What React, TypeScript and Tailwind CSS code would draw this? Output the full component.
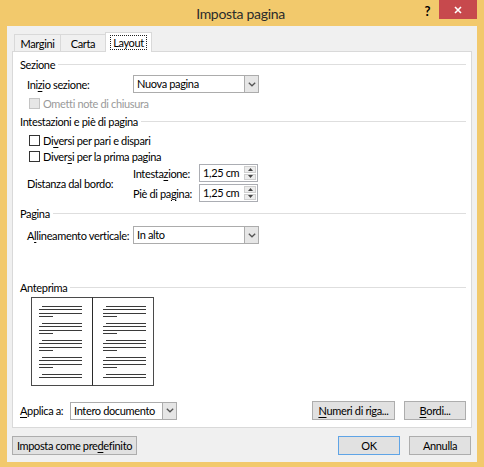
import React from 'react';

function U({ children }: { children: React.ReactNode }) {
  return <span className="underline underline-offset-[2px] decoration-[1px]">{children}</span>;
}

function Header({ label }: { label: string }) {
  return (
    <div className="flex items-center h-[15px] gap-[3px]">
      <span>{label}</span>
      <div className="flex-1 h-px bg-[#dedede]" />
    </div>
  );
}

function Chevron() {
  return (
    <svg width="8" height="5" viewBox="0 0 8 5">
      <path d="M0.8 0.8 L4 3.8 L7.2 0.8" fill="none" stroke="#555" strokeWidth="1.3" />
    </svg>
  );
}

function Select({ value, className }: { value: string; className: string }) {
  return (
    <div className={`flex h-[18px] border border-[#acacac] bg-white ${className}`}>
      <div className="flex-1 pl-[3px] leading-[16px]">{value}</div>
      <div className="w-[14px] bg-[#e6e6e6] border-l border-[#acacac] flex items-center justify-center">
        <Chevron />
      </div>
    </div>
  );
}

function Spinner({ value }: { value: string }) {
  return (
    <div className="flex h-[18px] w-[59px] border border-[#abadb3] bg-white">
      <div className="flex-1 pl-[3px] leading-[16px]">{value}</div>
      <div className="w-[14px] flex flex-col gap-px p-px">
        <div className="flex-1 bg-[#ececec] border border-[#cfcfcf] flex items-center justify-center">
          <svg width="5" height="3" viewBox="0 0 5 3"><path d="M0 3 L2.5 0 L5 3 Z" fill="#444" /></svg>
        </div>
        <div className="flex-1 bg-[#ececec] border border-[#cfcfcf] flex items-center justify-center">
          <svg width="5" height="3" viewBox="0 0 5 3"><path d="M0 0 L2.5 3 L5 0 Z" fill="#444" /></svg>
        </div>
      </div>
    </div>
  );
}

function Checkbox({ disabled }: { disabled?: boolean }) {
  return (
    <div
      className={
        disabled
          ? 'w-[11px] h-[11px] border border-[#c4c4c4] bg-[#e6e6e6]'
          : 'w-[11px] h-[11px] border border-[#333] bg-white'
      }
    />
  );
}

function Button({ children, className }: { children: React.ReactNode; className: string }) {
  return (
    <div className={`h-[19px] border bg-[#e1e1e1] flex items-center justify-center ${className}`}>
      {children}
    </div>
  );
}

function BookPreview() {
  const groups = [0, 1, 2, 3, 4];
  const pageLines = (x0: number) =>
    groups.map((g) => {
      const y = 9 + g * 16.9;
      const last = g === 4;
      return (
        <g key={`${x0}-${g}`} stroke="#3a3a3a" strokeWidth="1">
          <line x1={x0 + 3} y1={Math.round(y) + 0.5} x2={x0 + 43} y2={Math.round(y) + 0.5} />
          <line x1={x0} y1={Math.round(y + 3.4) + 0.5} x2={x0 + 43} y2={Math.round(y + 3.4) + 0.5} />
          {!last && (
            <>
              <line x1={x0} y1={Math.round(y + 6.8) + 0.5} x2={x0 + 43} y2={Math.round(y + 6.8) + 0.5} />
              <line x1={x0} y1={Math.round(y + 10.2) + 0.5} x2={x0 + 14} y2={Math.round(y + 10.2) + 0.5} />
            </>
          )}
        </g>
      );
    });
  return (
    <svg width="124" height="90" viewBox="0 0 124 90">
      <rect x="0.5" y="0.5" width="122" height="88" fill="#fff" stroke="#4a4a4a" />
      <line x1="61.5" y1="0.5" x2="61.5" y2="88.5" stroke="#2a2a2a" />
      {pageLines(8)}
      {pageLines(72)}
    </svg>
  );
}

export default function App() {
  return (
    <div className="w-[484px] h-[467px] bg-[#f2c96c] flex flex-col font-['Lato',sans-serif] text-[11px] tracking-[-0.35px] text-black leading-[15px] whitespace-nowrap">
      {/* title bar */}
      <div className="h-[26px] flex items-start">
        <div className="flex-1" />
        <div className="text-[14px] tracking-[-0.3px] leading-[27px] text-[#2b2b2b] pl-[4px]">Imposta pagina</div>
        <div className="flex-1 flex justify-end items-start pr-[7px]">
          <div className="text-[13px] font-bold leading-[22px] mr-[9px]">?</div>
          <div className="w-[38px] h-[19px] bg-[#c7494d] flex items-center justify-center">
            <svg width="8" height="8" viewBox="0 0 8 8">
              <path d="M1 1 L7 7 M7 1 L1 7" stroke="#fff" strokeWidth="1.6" />
            </svg>
          </div>
        </div>
      </div>

      {/* client area */}
      <div className="mx-[7px] mb-[7px] flex-1 bg-[#f0f0f0] flex flex-col px-[5px] pt-[6px] pb-[7px]">
        {/* tabs */}
        <div className="h-[19px] flex items-end pl-[2px]">
          <div className="h-[17px] w-[47px] border border-b-0 border-[#d9d9d9] bg-[#f0f0f0] flex items-center justify-center">Margini</div>
          <div className="h-[17px] w-[45px] border border-b-0 border-l-0 border-[#d9d9d9] bg-[#f0f0f0] flex items-center justify-center">Carta</div>
          <div className="relative z-10 h-[20px] w-[47px] -mb-px -ml-px border border-b-0 border-[#d9d9d9] bg-white flex items-center justify-center">
            <span className="border border-dotted border-[#222] px-[2px] leading-[13px]">Layout</span>
          </div>
        </div>

        {/* panel */}
        <div className="border border-[#d9d9d9] bg-white pl-[7px] pr-[5px] pt-[5px] pb-[7px] flex flex-col">
          <Header label="Sezione" />
          <div className="mt-[3px] ml-[7px] flex items-center">
            <div className="w-[106px]">Ini<U>z</U>io sezione:</div>
            <Select value="Nuova pagina" className="w-[126px]" />
          </div>
          <div className="mt-[3px] ml-[9px] h-[14px] flex items-center gap-[3px] text-[#9a9a9a]">
            <Checkbox disabled />
            <span>Ometti note di chiusura</span>
          </div>

          <div className="mt-[4px]">
            <Header label="Intestazioni e piè di pagina" />
          </div>
          <div className="mt-[4px] ml-[9px] h-[14px] flex items-center gap-[3px]">
            <Checkbox />
            <span>Di<U>v</U>ersi per pari e dispari</span>
          </div>
          <div className="mt-[2px] ml-[9px] h-[14px] flex items-center gap-[3px]">
            <Checkbox />
            <span>Diver<U>s</U>i per la prima pagina</span>
          </div>
          <div className="mt-[1px] ml-[7px] flex items-center">
            <div className="w-[106px]">Distanza dal bordo:</div>
            <div className="flex flex-col gap-[2px]">
              <div className="flex items-center">
                <div className="w-[66px]">Intesta<U>z</U>ione:</div>
                <Spinner value="1,25 cm" />
              </div>
              <div className="flex items-center">
                <div className="w-[66px]">Piè di pa<U>g</U>ina:</div>
                <Spinner value="1,25 cm" />
              </div>
            </div>
          </div>

          <div className="mt-[4px]">
            <Header label="Pagina" />
          </div>
          <div className="mt-[5px] ml-[7px] flex items-center">
            <div className="w-[106px]">A<U>l</U>lineamento verticale:</div>
            <Select value="In alto" className="w-[126px]" />
          </div>

          <div className="mt-[36px]">
            <Header label="Anteprima" />
          </div>
          <div className="mt-[2px] ml-[11px]">
            <BookPreview />
          </div>

          <div className="mt-[14px] flex items-center">
            <div className="w-[50px]"><U>A</U>pplica a:</div>
            <Select value="Intero documento" className="w-[107px]" />
            <div className="ml-auto flex gap-[9px]">
              <Button className="w-[83px] border-[#adadad]"><U>N</U>umeri di riga...</Button>
              <Button className="w-[62px] border-[#adadad]"><U>B</U>ordi...</Button>
            </div>
          </div>
        </div>

        {/* bottom buttons */}
        <div className="mt-[8px] flex items-center">
          <Button className="w-[125px] border-[#adadad]">Imposta come pre<U>d</U>efinito</Button>
          <div className="ml-auto flex gap-[9px] pr-px">
            <Button className="w-[62px] border-[#5fa4e6]">OK</Button>
            <Button className="w-[62px] border-[#adadad]">Annulla</Button>
          </div>
        </div>
      </div>
    </div>
  );
}
